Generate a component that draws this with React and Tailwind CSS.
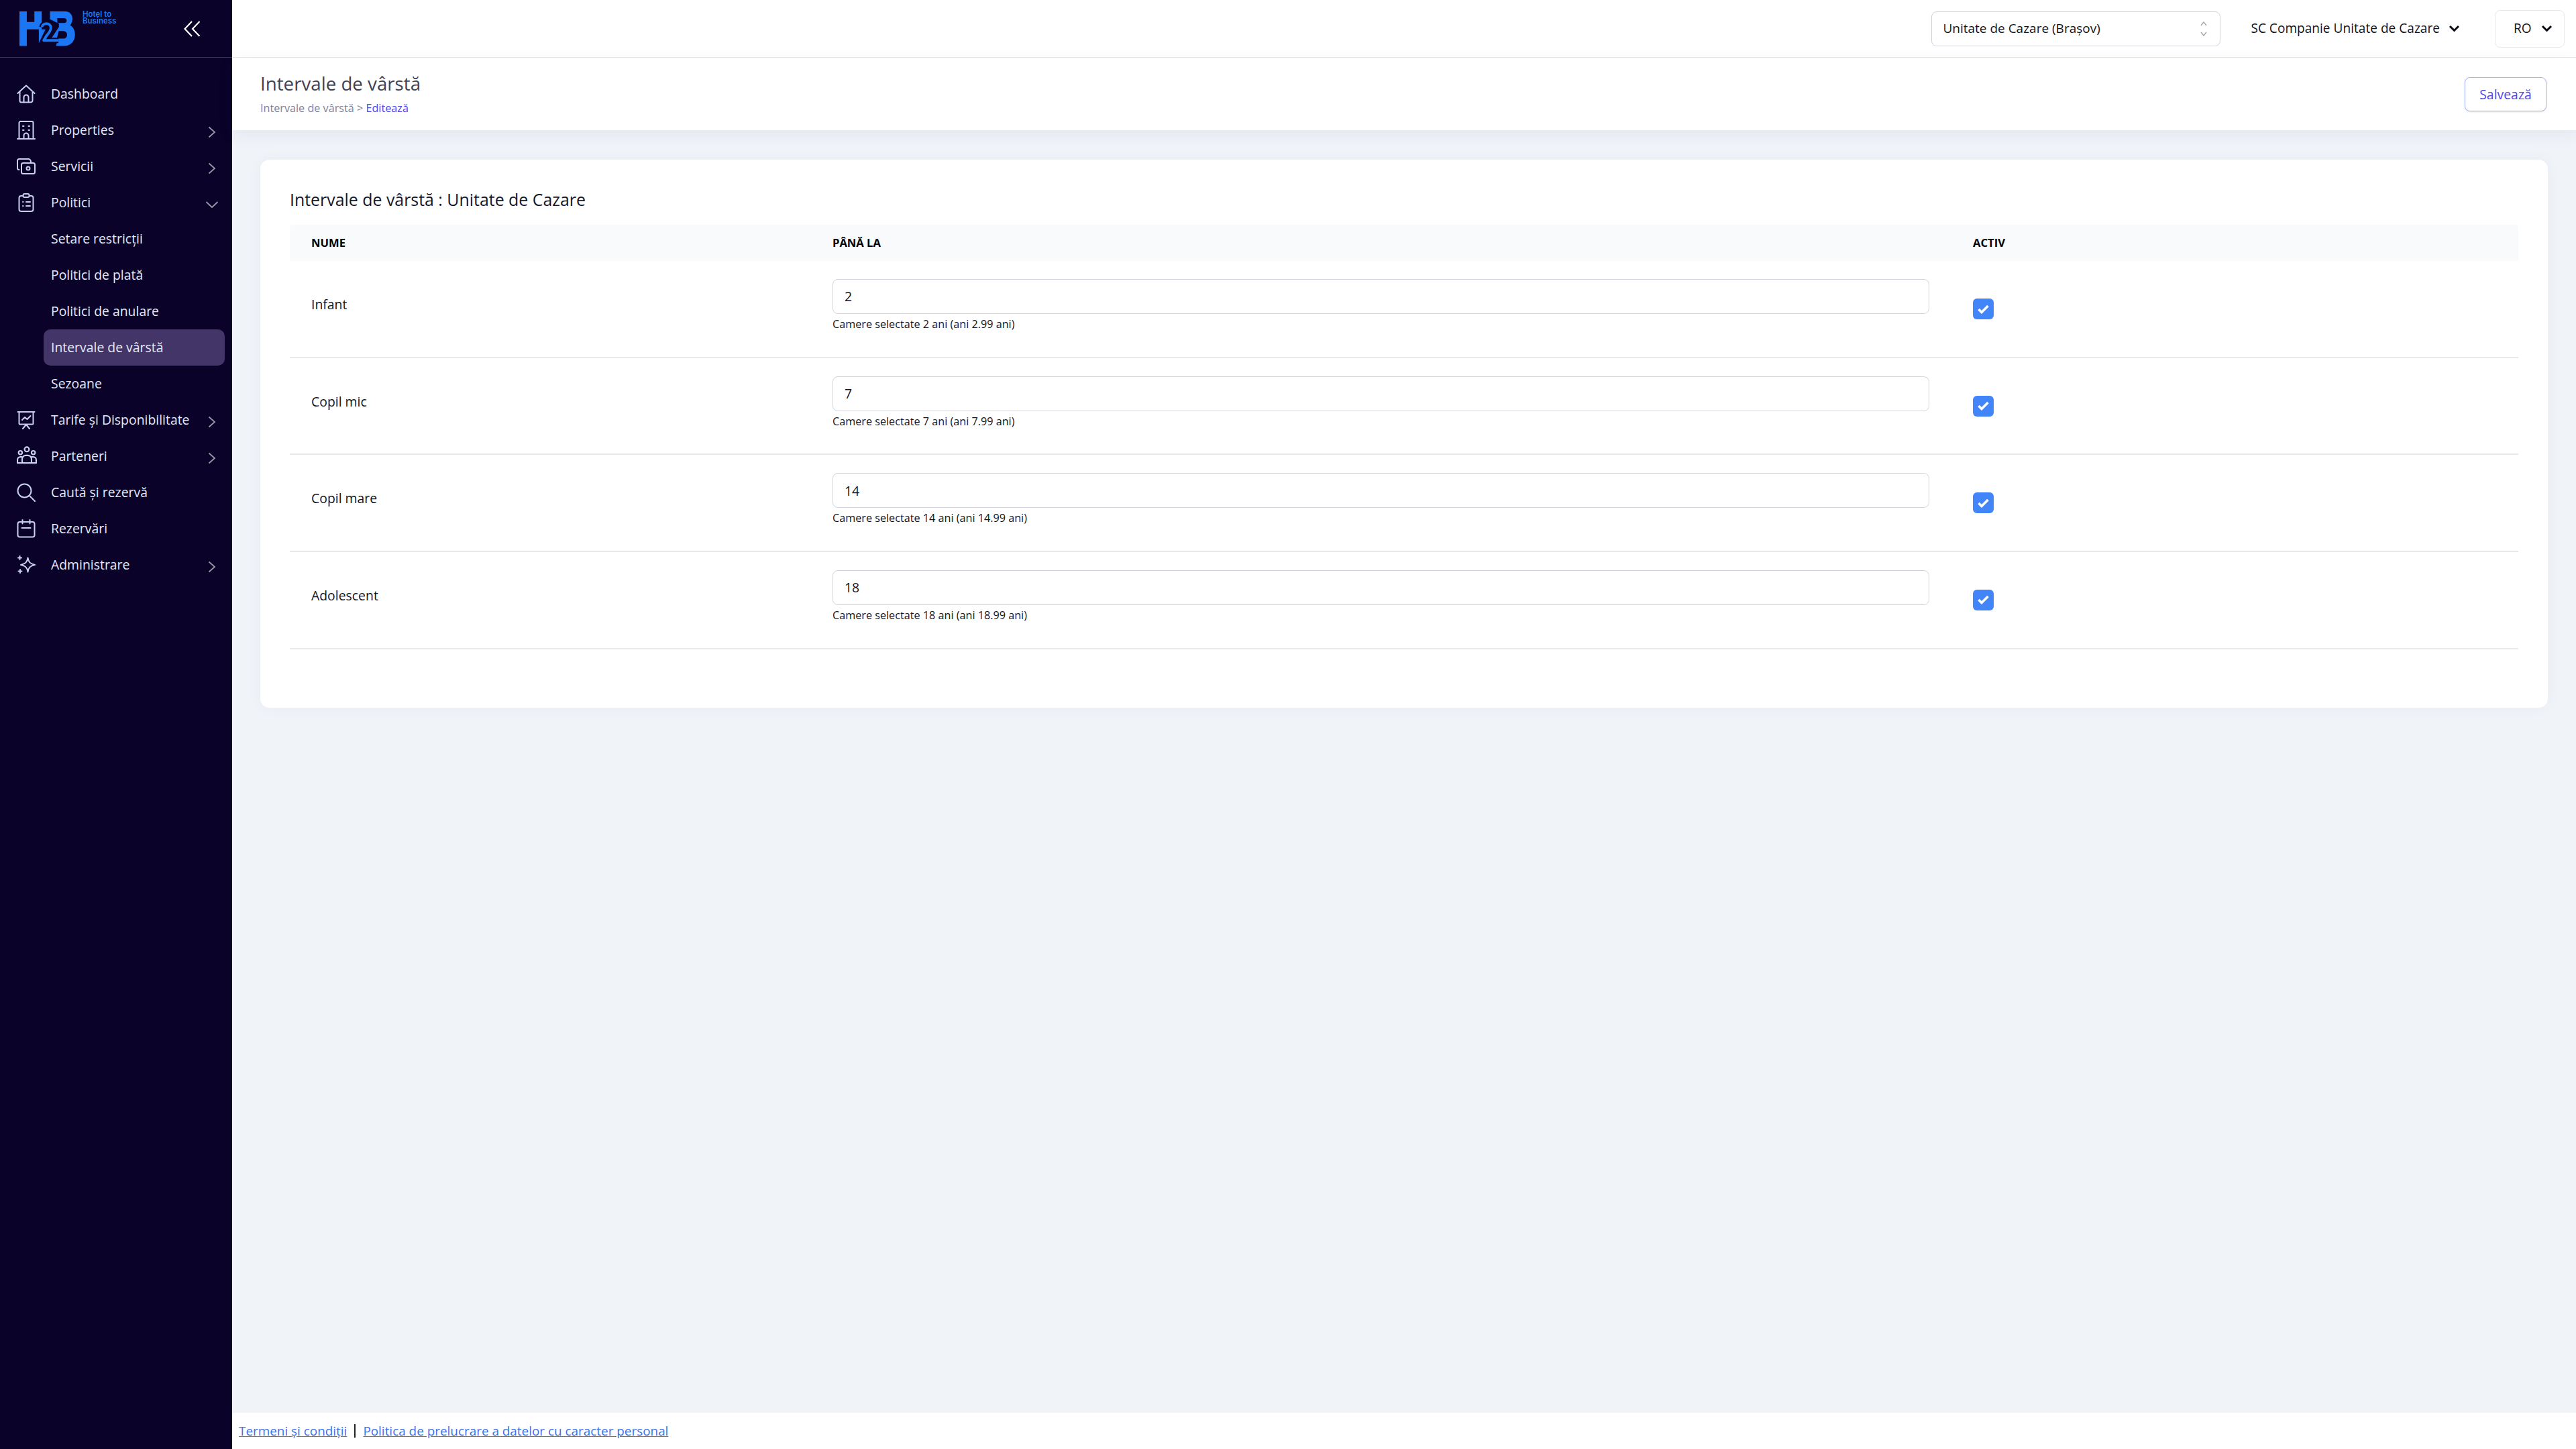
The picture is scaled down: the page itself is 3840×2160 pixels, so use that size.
import React from "react";

const Ic = ({ children, w = 28 }) => (
  <svg width={w} height={w} viewBox="0 0 28 28" fill="none" stroke="#c9cff2" strokeWidth="2" strokeLinecap="round" strokeLinejoin="round" className="shrink-0">
    {children}
  </svg>
);

const icons = {
  home: (
    <Ic>
      <path d="M1.500 13 14 1.500 26.500 13" />
      <path d="M4.500 11v13a2.500 2.500 0 0 0 2.500 2.500h14a2.500 2.500 0 0 0 2.500-2.500V11" />
      <path d="M10.500 26.500V19a3.500 3.500 0 0 1 7 0v7.500" />
    </Ic>
  ),
  building: (
    <Ic>
      <path d="M1 27h26" />
      <path d="M3.500 27V3a2 2 0 0 1 2-2h17a2 2 0 0 1 2 2v24" />
      <path d="M9 8h1.500M17.500 8H19M9 14h1.500M17.500 14H19" />
      <path d="M10.500 27v-5a3.500 3.500 0 0 1 7 0v5" />
    </Ic>
  ),
  money: (
    <Ic>
      <rect x="7" y="9" width="20" height="16" rx="2.500" />
      <path d="M3.500 19A2.500 2.500 0 0 1 1 16.500V5.500A2.500 2.500 0 0 1 3.500 3h13A4 4 0 0 1 21 7v2" />
      <circle cx="17" cy="17" r="2.500" />
    </Ic>
  ),
  clip: (
    <Ic>
      <rect x="3.500" y="4" width="21" height="23" rx="3" />
      <rect x="9.500" y="1" width="9" height="5" rx="2" fill="#0a0229" />
      <path d="M9 13h.5M14 13h6M9 19h.5M14 19h6" />
    </Ic>
  ),
  chart: (
    <Ic>
      <path d="M1.500 2h25" />
      <path d="M3.500 2v17a1.500 1.500 0 0 0 1.500 1.500h18a1.500 1.500 0 0 0 1.500-1.500V2" />
      <path d="m8 14 4-4 3.500 3 5-5" />
      <path d="m9 27 5-6 5 6" />
    </Ic>
  ),
  people: (
    <Ic w={30}>
      <circle cx="14" cy="4.500" r="3.200" />
      <circle cx="5" cy="9" r="2.500" />
      <circle cx="23" cy="9" r="2.500" />
      <path d="M1 23v-4a4 4 0 0 1 4-4h2.500M27 23v-4a4 4 0 0 0-4-4h-2.500" />
      <path d="M7.500 23v-5a5 5 0 0 1 5-5h3a5 5 0 0 1 5 5v5" />
      <path d="M1 23.500h26" />
    </Ic>
  ),
  search: (
    <Ic>
      <circle cx="11.500" cy="11.500" r="10" />
      <path d="m19 19 8 8" />
    </Ic>
  ),
  cal: (
    <Ic>
      <rect x="1.500" y="4" width="25" height="22.500" rx="3" />
      <path d="M8.500 1v5.500M19.500 1v5.500M7.500 13h13" />
    </Ic>
  ),
  star: (
    <Ic>
      <path d="M15.500 3.500c1 6.500 3.500 9 10.500 10.500-7 1.500-9.500 4-10.500 10.500C14.500 18 12 15.500 5 14c7-1.500 9.500-4 10.500-10.500Z" transform="translate(1 0)" />
      <path d="M4.500 1v5M2 3.500h5M5 21v5M2.500 23.500h5" />
    </Ic>
  ),
};

const Right = () => (
  <svg width="12" height="18" viewBox="0 0 12 18" fill="none" stroke="#9b99a9" strokeWidth="1.800" className="shrink-0 mt-1.5">
    <path d="m1.500 1.500 8.500 7.500-8.500 7.500" />
  </svg>
);
const Down = () => (
  <svg width="20" height="12" viewBox="0 0 20 12" fill="none" stroke="#9b99a9" strokeWidth="1.800" className="shrink-0 mt-1.5 -mr-1">
    <path d="m1.500 2 8.500 8 8.500-8" />
  </svg>
);
const Caret = () => (
  <svg width="17" height="11" viewBox="0 0 17 11" fill="none" stroke="#0b0b14" strokeWidth="3" className="shrink-0">
    <path d="m2 2 6.500 6.500L15 2" />
  </svg>
);

function NavRow({ icon, label, arrow }) {
  return (
    <div className="h-[54px] flex items-center pl-[25px] pr-[24px] text-[19.4px] text-[#e4e8fb]">
      <span className="w-[51px] shrink-0 flex">{icons[icon]}</span>
      <span className="flex-1 whitespace-nowrap">{label}</span>
      {arrow === "r" && <Right />}
      {arrow === "d" && <Down />}
    </div>
  );
}

function SubRow({ label, active }) {
  return (
    <div className={`h-[54px] ml-[65px] mr-[11px] pl-[11px] flex items-center rounded-[10px] text-[19.4px] text-[#e4e8fb] ${active ? "bg-[#433568]" : ""}`}>
      {label}
    </div>
  );
}

function Logo() {
  return (
    <div className="flex items-start">
      <svg width="87" height="54" viewBox="82 47 262 162" className="shrink-0">
        <path fill="#1a76f2" d="M85 50h33v47h34V50h33v80h-13v0l30 0-30 62V130h-54v75H85Z" />
        <path fill="#1a76f2" fillRule="evenodd" d="M222 50h68c30 0 44 32 23 62 32 14 32 93-28 93h-35l4-25h-32l40-60V105l-40-20Zm33 30v22h30c16 0 16-22 0-22Zm6 58-8 34h28c24 0 24-34 0-34Z" />
        <path fill="none" stroke="#0a0229" strokeWidth="24" strokeLinejoin="round" d="M186 120c2-20 38-22 40 2 1 14-8 23-18 35l-14 23h66" />
        <path fill="none" stroke="#1a76f2" strokeWidth="12" strokeLinejoin="round" d="M186 120c2-20 38-22 40 2 1 14-8 23-18 35l-14 23h66" />
      </svg>
      <div className="ml-[8px] text-[#1a76f2] text-[11.5px] leading-[10.5px] font-semibold font-['Inter',sans-serif] whitespace-nowrap">
        Hotel to
        <br />
        Business
      </div>
    </div>
  );
}

const rows = [
  ["Infant", "2"],
  ["Copil mic", "7"],
  ["Copil mare", "14"],
  ["Adolescent", "18"],
];

export default function App() {
  return (
    <div className="h-screen w-full flex font-['Open_Sans',sans-serif] bg-[#f0f3f8] overflow-hidden">
      <aside className="w-[346px] shrink-0 bg-[#0a0229] flex flex-col">
        <div className="h-[86px] border-b border-[#3f3563] flex items-center justify-between pl-[28px] pr-[47px] shrink-0">
          <Logo />
          <svg width="25" height="24" viewBox="0 0 25 24" fill="none" stroke="#ffffff" strokeWidth="2.200">
            <path d="M12 1 1.500 12 12 23M23.500 1 13 12l10.500 11" />
          </svg>
        </div>
        <nav className="pt-[27px] flex flex-col">
          <NavRow icon="home" label="Dashboard" />
          <NavRow icon="building" label="Properties" arrow="r" />
          <NavRow icon="money" label="Servicii" arrow="r" />
          <NavRow icon="clip" label="Politici" arrow="d" />
          <SubRow label="Setare restricții" />
          <SubRow label="Politici de plată" />
          <SubRow label="Politici de anulare" />
          <SubRow label="Intervale de vârstă" active />
          <SubRow label="Sezoane" />
          <NavRow icon="chart" label="Tarife și Disponibilitate" arrow="r" />
          <NavRow icon="people" label="Parteneri" arrow="r" />
          <NavRow icon="search" label="Caută și rezervă" />
          <NavRow icon="cal" label="Rezervări" />
          <NavRow icon="star" label="Administrare" arrow="r" />
        </nav>
      </aside>

      <div className="flex-1 min-w-0 flex flex-col">
        <header className="h-[86px] shrink-0 bg-white border-b border-[#e7e8ec] flex items-center justify-end pr-[17px]">
          <div className="w-[431px] h-[52px] border border-[#d2d3dc] rounded-[8px] flex items-center justify-between pl-[16px] pr-[18px] text-[19px] text-[#14141c] whitespace-nowrap">
            Unitate de Cazare (Brașov)
            <svg width="12" height="26" viewBox="0 0 12 26" fill="none" stroke="#a8aab4" strokeWidth="1.500">
              <path d="m2 8 4-5 4 5M2 18l4 5 4-5" />
            </svg>
          </div>
          <div className="ml-[45px] flex items-center gap-[13px] text-[19.1px] text-[#14141c] whitespace-nowrap">
            SC Companie Unitate de Cazare
            <Caret />
          </div>
          <div className="ml-[52px] w-[104px] h-[56px] border border-[#e7e8ec] rounded-[8px] flex items-center pl-[27px] gap-[14px] text-[19.1px] text-[#14141c]">
            RO
            <Caret />
          </div>
        </header>

        <div className="h-[108px] shrink-0 bg-white flex justify-between pl-[42px] pr-[44px] shadow-[0_6px_24px_rgba(60,70,100,0.07)]">
          <div className="pt-[18px]">
            <h1 className="text-[27.7px] leading-[40px] text-[#3f4254]">Intervale de vârstă</h1>
            <p className="text-[16.2px] leading-[22px] mt-[6px] text-[#7e8299] whitespace-nowrap">
              Intervale de vârstă <span className="text-[#7e8299]">&gt;</span> <span className="text-[#4f46e5]">Editează</span>
            </p>
          </div>
          <button className="mt-[29px] w-[122px] h-[51px] border border-[#a5b4fc] rounded-[8px] bg-white text-[#4f46e5] text-[19.4px] shadow-sm">
            Salvează
          </button>
        </div>

        <main className="flex-1 min-h-0 px-[42px] pt-[44px] pb-0">
          <section className="bg-white rounded-[14px] px-[44px] pt-[42px] pb-[87px] shadow-[0_0_24px_rgba(60,70,100,0.04)]">
            <h2 className="text-[24.9px] leading-[34px] text-[#14172b] mb-[21px]">Intervale de vârstă : Unitate de Cazare</h2>
            <div className="grid grid-cols-[777px_1700px_1fr] h-[54px] items-center bg-[#f9fafb] text-[16.6px] font-bold text-black rounded-t-[4px]">
              <div className="pl-[32px]">NUME</div>
              <div className="pl-[32px]">PÂNĂ LA</div>
              <div className="pl-[32px]">ACTIV</div>
            </div>
            {rows.map(([name, v]) => (
              <div key={name} className="grid grid-cols-[777px_1700px_1fr] h-[144.67px] border-b-2 border-[#e8e9ec] items-start">
                <div className="pl-[32px] pt-[51px] text-[19.4px] leading-[28px] text-[#14141c]">{name}</div>
                <div className="pl-[32px] pr-[33px] pt-[27px]">
                  <div className="h-[52px] border border-[#d2d3dc] rounded-[8px] flex items-center pl-[17px] text-[19.4px] text-[#14141c]">{v}</div>
                  <p className="text-[16.2px] leading-[24px] mt-[3px] text-[#14141c]">
                    Camere selectate {v} ani (ani {v}.99 ani)
                  </p>
                </div>
                <div className="pl-[32px] pt-[56px]">
                  <div className="w-[31px] h-[31px] rounded-[6px] bg-[#4285f9] flex items-center justify-center">
                    <svg width="17" height="14" viewBox="0 0 17 14" fill="none" stroke="#ffffff" strokeWidth="3.600">
                      <path d="m1.500 7 4.500 4.500L15.500 2" />
                    </svg>
                  </div>
                </div>
              </div>
            ))}
          </section>
        </main>

        <footer className="h-[54px] shrink-0 bg-white flex items-center pl-[10px] text-[18.9px] text-[#14141c] whitespace-nowrap">
          <a className="text-[#3b72e8] underline">Termeni și condiții</a>
          <span className="mx-[11px] w-[2px] h-[20px] bg-[#222]" />
          <a className="text-[#3b72e8] underline">Politica de prelucrare a datelor cu caracter personal</a>
        </footer>
      </div>
    </div>
  );
}
